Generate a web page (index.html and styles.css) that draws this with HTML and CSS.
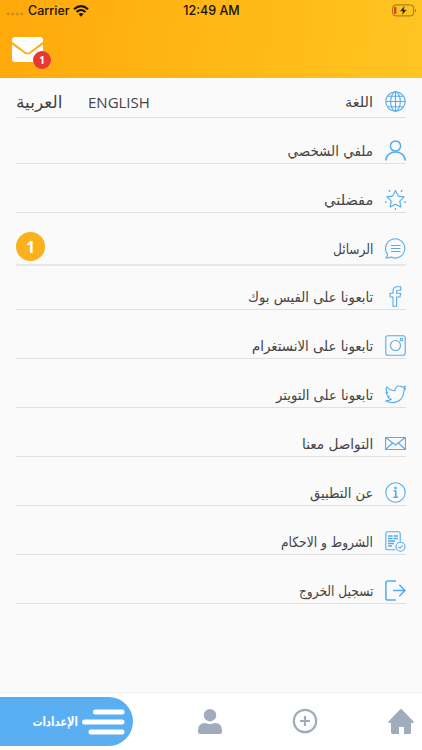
FILE: index.html
```html
<!DOCTYPE html>
<html lang="ar" dir="rtl">
<head>
<meta charset="utf-8">
<title>الإعدادات</title>
<link rel="stylesheet" href="styles.css">
</head>
<body>
<div class="app">
<header class="header" dir="ltr">
  <div class="status">
    <div class="carrier"><i class="dots"></i><span>Carrier</span>
      <svg width="16" height="12" viewBox="0 0 16 12" fill="none" stroke="#171309" stroke-width="2.1"><path d="M1 4.2Q8-2 15 4.2M3.5 7Q8 3 12.5 7"/><path d="M5.5 9Q8 7 10.5 9L8 11.7Z" fill="#171309" stroke="none"/></svg>
    </div>
    <span class="time">12:49 AM</span>
    <svg class="battery" width="25" height="13" viewBox="0 0 25 13"><rect x=".6" y=".9" width="21" height="11" rx="3" fill="none" stroke="#967421"/><path d="M23 4.5q2 2 0 4z" fill="#967421"/><rect x="2" y="2.7" width="2.4" height="7.4" rx=".8" fill="#f3392b"/><path d="M12.8 1.6 7.8 7.2h3l-1 4.3 5-5.8h-3z" fill="#171309" stroke="#febd1b" stroke-width=".5"/></svg>
  </div>
  <div class="mail">
    <svg width="32" height="25" viewBox="0 0 32 25" fill="#fff"><path d="M3 0h25a3 3 0 0 1 3 3v1.800L17.500 15q-2 1.400-4 0L0 4.800V3a3 3 0 0 1 3-3z"/><path d="M0 7.400 13 16.700q2.500 1.600 5 0L31 7.400V22a3 3 0 0 1-3 3H3a3 3 0 0 1-3-3z"/></svg>
    <b class="badge">1</b>
  </div>
</header>
<main class="list">
  <div class="row r1"><svg class="icon" viewBox="0 0 21 21"><circle cx="10.500" cy="10.500" r="9.700"/><ellipse cx="10.500" cy="10.500" rx="4.800" ry="9.700"/><path d="M10.500.8v19.400M.8 10.500h19.400M2.500 5.300h16M2.500 15.700h16"/></svg><span class="label">اللغة</span><div class="langs" dir="ltr"><span class="ar">العربية</span><span class="en">ENGLISH</span></div></div>
  <div class="row r2"><svg class="icon bold" viewBox="0 0 21 21"><circle cx="10.500" cy="6" r="5.100"/><path d="M.8 20.500C1.200 9.200 19.800 9.200 20.200 20.500"/></svg><span class="label">ملفي الشخصي</span></div>
  <div class="row r3"><svg class="icon" viewBox="0 0 21 21"><path stroke-linejoin="round" d="m10.500 1.600 2.700 5.500 6 .8-4.400 4.200 1 6-5.300-2.900-5.300 2.900 1-6L1.800 7.900l6-.8z"/><path stroke-width="1.400" stroke-linecap="round" d="m4.200 1.600.5.600M16.800 1.600l-.5.600M.6 13.200l.6-.2M20.400 13.200l-.6-.2M10.500 19.800v.5"/></svg><span class="label">مفضلتي</span></div>
  <div class="row r4"><svg class="icon" viewBox="0 0 21 21"><path d="M2.400 16.100A9.600 9.600 0 1 1 6 19.100Q3.500 20.400 1 19.800 2.800 18.300 2.400 16.100z"/><path d="M6 7.500h9.500M6 10.500h9.500M6 13.500h9.500" stroke-width="1.200"/></svg><span class="label">الرسائل</span><b class="count">1</b></div>
  <div class="row r5"><svg class="icon" viewBox="0 0 21 21"><path stroke-linejoin="round" d="M8 20.300V11H5V7.300h3V5q0-4.300 4.300-4.300h3.500v3.600H13q-1.400 0-1.400 1.400v1.600h4L15 11h-3.400v9.300z"/></svg><span class="label">تابعونا على الفيس بوك</span></div>
  <div class="row r6"><svg class="icon" viewBox="0 0 21 21"><rect x=".8" y=".8" width="19.400" height="19.400" rx="2"/><circle cx="10.500" cy="10.500" r="5"/><circle cx="16.500" cy="4.500" r="1.300"/></svg><span class="label">تابعونا على الانستغرام</span></div>
  <div class="row r7"><svg class="icon" viewBox="0 0 21 21"><path stroke-linejoin="round" d="M1.800 2.800Q5.500 6.700 10 6.700C9.700 3.500 12 2 14.200 2q1.800 0 3.100 1.300L20.300 2.300 19 4.800l1.500-.2L18.800 7C18.700 14 14 18.700 8 18.600q-4-.1-7.300-1.700 3.600 0 5.600-1.500-3-.5-3.700-2.700h1.500Q1.400 11.300 1 8.500l1.700.4Q-.1 6 1.800 2.800z"/></svg><span class="label">تابعونا على التويتر</span></div>
  <div class="row r8"><svg class="icon" viewBox="0 0 21 21"><path d="M.6 4.500h19.800v12H.6zM.6 4.500l9.900 7.500 9.900-7.500M.6 16.500 7.500 10M20.400 16.500 13.500 10"/></svg><span class="label">التواصل معنا</span></div>
  <div class="row r9"><svg class="icon" viewBox="0 0 21 21"><circle cx="10.500" cy="10.500" r="9.700"/><circle cx="10.500" cy="6.100" r="1.300" fill="#55abee" stroke="none"/><path d="M8.500 9h2.300v6.200M8.300 15.200h4.800" stroke-width="1.600"/></svg><span class="label">عن التطبيق</span></div>
  <div class="row r10"><svg class="icon" viewBox="0 0 21 21"><path d="M10.300 18.800H2.500A1.700 1.700 0 0 1 .8 17.100V2.500A1.700 1.700 0 0 1 2.500.8h11a1.700 1.700 0 0 1 1.700 1.700v8"/><path d="M3 5h4.500M8.500 5H13M3 7.500h4.500M8.500 7.500H13M3 10h7M3 12.500h6M3 15h4" stroke-width="1.300"/><circle cx="15.500" cy="15.800" r="4.500"/><path d="m13.500 15.800 1.500 1.500 2.700-3"/></svg><span class="label">الشروط و الاحكام</span></div>
  <div class="row r11"><svg class="icon bold" viewBox="0 0 21 21"><path d="M11 .9H3Q.9.900.9 3v15q0 2.100 2.100 2.100h8M8 10.500h12M14.300 4.800l5.700 5.700-5.700 5.700"/></svg><span class="label">تسجيل الخروج</span></div>
</main>
<nav class="nav" dir="ltr">
  <div class="tab"><span class="tabname" dir="rtl">الإعدادات</span><svg width="43" height="26" viewBox="0 0 43 26" stroke="#fff" stroke-width="5" stroke-linecap="round"><path d="M13.500 3h26.500M2.500 13H40M9 23h31"/></svg></div>
  <svg class="n-user" width="24" height="25" viewBox="0 0 24 25"><circle cx="12" cy="6.200" r="6.200"/><path d="M0 25v-3.500q0-7.500 7-7.500 5 2 10 0 7 0 7 7.500V23q0 2-2 2H2q-2 0-2-2z"/></svg>
  <svg class="n-plus" width="26" height="26" viewBox="0 0 26 26"><circle cx="13" cy="13" r="11.200"/><path d="M13 8v10M8 13h10"/></svg>
  <svg class="n-home" width="26" height="25" viewBox="0 0 26 25"><path d="M12 .5q1-.9 2 0l11.500 12q.7 1.500-.8 1.500H23v9.500q0 1.500-1.500 1.500H16v-7h-5v7H4.500Q3 25 3 23.500V14H1.300Q-.2 14 .5 12.500z"/></svg>
</nav>
</div>
</body>
</html>
```
FILE: styles.css
```css
* { box-sizing: border-box; }
body { margin: 0; background: #fafafa; color: #444; font-family: "DejaVu Sans", sans-serif; }
svg { display: block; flex: none; }
.app { width: 422px; height: 750px; display: flex; flex-direction: column; overflow: hidden; }
.header { height: 78px; flex: none; background: linear-gradient(100deg, #ffa90b, #ffc522); }
.status { height: 21px; display: grid; grid-template-columns: 1fr auto 1fr; align-items: center; padding: 0 5px 0 6px; font: 500 12.5px/21px Inter, sans-serif; color: #171309; }
.carrier { display: flex; align-items: center; }
.carrier span { margin: 0 3px 0 4px; letter-spacing: 0; }
.dots { width: 18px; height: 4px; margin-top: 6px; background: radial-gradient(circle, #c98d20 1.200px, transparent 1.800px) 0 0 / 4.500px 4px; }
.time { letter-spacing: 0; }
.battery { justify-self: end; }
.mail { position: relative; width: 32px; margin: 16px 0 0 12px; }
.badge { position: absolute; left: 21px; top: 14px; width: 18px; height: 18px; border-radius: 50%; background: #e53935; color: #fff; font: 700 10px/19px "Open Sans", sans-serif; text-align: center; }
.list { flex: 1; padding: 0 16px; }
.row { --fit: 1; display: flex; align-items: flex-end; height: 49px; padding-bottom: 2px; border-bottom: 1px solid #e0e0e0; }
.icon { width: 21px; height: 21px; fill: none; stroke: #55abee; stroke-width: 1.100; }
.icon.bold { stroke-width: 1.500; }
.label { margin: 0 12px -1px 0; font-size: 14px; line-height: 21px; white-space: nowrap; transform: scaleX(var(--fit)); transform-origin: right; }
.r1 { --fit: 1.040; height: 40px; padding-bottom: 5px; }
.r2 { --fit: .960; height: 46px; }
.r3 { --fit: 1.040; }
.r4 { --fit: .870; height: 53px; padding-bottom: 5px; border-bottom: 2px solid #e7e7e7; }
.r5 { --fit: .947; height: 44px; }
.r6 { --fit: .953; }
.r7 { --fit: .942; }
.r8 { --fit: .973; }
.r9 { --fit: .941; height: 48px; }
.r10 { --fit: .876; }
.r11 { --fit: .872; }
.r9, .r10, .r11 { height: 49px; }
.langs { margin-right: auto; display: flex; gap: 25px; font: 15px/20px "Open Sans", "DejaVu Sans", sans-serif; }
.langs span { white-space: nowrap; }
.ar { width: 47px; font-size: 17px; }
.en { width: 62px; }
.count { margin-right: auto; width: 29px; height: 29px; margin-bottom: -2px; border-radius: 50%; background: #fbb11e; color: #fff; font: 700 16px/30px "Open Sans", sans-serif; text-align: center; }
.nav { height: 58px; flex: none; background: #fff; border-top: 1px solid #f0f0f0; display: flex; align-items: flex-start; padding-top: 4px; fill: #a0acbc; }
.tab { width: 133px; height: 49px; flex: none; background: #5aaff2; border-radius: 0 25px 25px 0; display: flex; align-items: center; justify-content: flex-end; gap: 4px; padding-right: 8px; }
.tabname { color: #fff; font-size: 12.500px; font-weight: 700; white-space: nowrap; transform: scaleX(.800); transform-origin: right; }
.n-user { margin: 12px 0 0 65px; }
.n-plus { margin: 11px 0 0 70px; fill: none; stroke: #a0acbc; stroke-width: 2.200; }
.n-home { margin: 12px 0 0 70px; }
```
